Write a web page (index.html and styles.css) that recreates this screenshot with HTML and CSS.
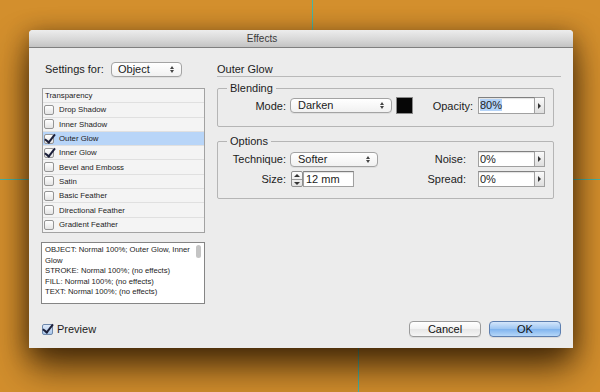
FILE: index.html
```
<!DOCTYPE html>
<html>
<head>
  <meta charset="UTF-8">
  <title>Effects</title>
  <link rel="stylesheet" href="styles.css">
</head>
<body>
  <div class="desk">
    <div class="guide guide-h"></div>
    <div class="guide guide-top"></div>
    <div class="guide guide-bottom"></div>

    <div class="dialog">
      <div class="titlebar">Effects</div>
      <div class="dialog-body">
        <div class="columns">
          <div class="col-left">
            <div class="settings-for">
              <span class="sf-label">Settings for:</span>
              <div class="select select-object">Object<span class="updown"></span></div>
            </div>

            <ul class="effect-list">
              <li class="head">Transparency</li>
              <li><span class="cb"></span>Drop Shadow</li>
              <li><span class="cb"></span>Inner Shadow</li>
              <li class="selected"><span class="cb checked"></span>Outer Glow</li>
              <li><span class="cb checked"></span>Inner Glow</li>
              <li><span class="cb"></span>Bevel and Emboss</li>
              <li><span class="cb"></span>Satin</li>
              <li><span class="cb"></span>Basic Feather</li>
              <li><span class="cb"></span>Directional Feather</li>
              <li><span class="cb"></span>Gradient Feather</li>
            </ul>

            <div class="summary">
              <p>OBJECT: Normal 100%; Outer Glow, Inner Glow</p>
              <p>STROKE: Normal 100%; (no effects)</p>
              <p>FILL: Normal 100%; (no effects)</p>
              <p>TEXT: Normal 100%; (no effects)</p>
              <span class="thumb"></span>
            </div>
          </div>

          <div class="col-right">
            <div class="panel-title">Outer Glow</div>

            <div class="group blending">
              <div class="group-title">Blending</div>
              <div class="row">
                <span class="lbl">Mode:</span>
                <div class="select select-mode">Darken<span class="updown"></span></div>
                <span class="swatch"></span>
                <span class="lbl lbl-opacity">Opacity:</span>
                <div class="field"><span class="sel">80%</span></div>
                <span class="arrow-btn"></span>
              </div>
            </div>

            <div class="group options">
              <div class="group-title">Options</div>
              <div class="row">
                <span class="lbl">Technique:</span>
                <div class="select select-tech">Softer<span class="updown"></span></div>
                <span class="lbl lbl-noise">Noise:</span>
                <div class="field">0%</div>
                <span class="arrow-btn"></span>
              </div>
              <div class="row row-size">
                <span class="lbl">Size:</span>
                <span class="spinner"><i class="up"></i><i class="down"></i></span>
                <div class="field field-size">12 mm</div>
                <span class="lbl lbl-spread">Spread:</span>
                <div class="field">0%</div>
                <span class="arrow-btn"></span>
              </div>
            </div>
          </div>
        </div>

        <div class="footer">
          <div class="preview"><span class="cb checked blue"></span>Preview</div>
          <div class="buttons">
            <button class="btn">Cancel</button>
            <button class="btn btn-ok">OK</button>
          </div>
        </div>
      </div>
    </div>
  </div>
</body>
</html>
```
FILE: styles.css
```
body {
  margin: 0;
  width: 600px;
  height: 392px;
  overflow: hidden;
  background-color: #d38f2d;
  font-family: "Liberation Sans", Arial, sans-serif;
  font-size: 11px;
  color: #1c1c1c;
}
.desk {
  position: relative;
  width: 600px;
  height: 392px;
  padding-top: 30px;
  box-sizing: border-box;
}
.guide {
  position: absolute;
  background-color: #45b5a6;
}
.guide-h {
  left: 0;
  right: 0;
  top: 179px;
  height: 1px;
}
.guide-top {
  left: 312px;
  top: 0;
  width: 1px;
  height: 40px;
}
.guide-bottom {
  left: 358px;
  top: 340px;
  width: 1px;
  height: 52px;
}
.dialog {
  position: relative;
  margin-left: 29px;
  width: 544px;
  height: 318px;
  background-color: #ececec;
  border-radius: 4px 4px 0 0;
  box-shadow: 0 20px 36px rgba(35, 18, 0, 0.72), 0 4px 22px rgba(35, 18, 0, 0.45);
  display: flex;
  flex-direction: column;
}
.titlebar {
  height: 17px;
  line-height: 17px;
  border-bottom: 1px solid #7f7f7f;
  border-radius: 4px 4px 0 0;
  background: linear-gradient(#ededed, #d6d6d6 60%, #c3c3c3);
  text-align: center;
  padding-right: 78px;
  font-size: 10px;
  color: #3a3a3a;
}
.dialog-body {
  padding: 14px 12px 0 12px;
}
.columns {
  display: flex;
}
.col-left {
  width: 164px;
}
.col-right {
  flex: 1;
  margin-left: 12px;
}
.settings-for {
  display: flex;
  align-items: center;
  height: 14px;
  padding-left: 4px;
}
.sf-label {
  width: 66px;
}
.select {
  position: relative;
  box-sizing: border-box;
  height: 15px;
  line-height: 13px;
  padding-left: 7px;
  border: 1px solid #a3a3a3;
  border-radius: 4px;
  background: linear-gradient(#ffffff, #f1f1f1);
  box-shadow: 0 1px 0 rgba(0, 0, 0, 0.06);
}
.updown {
  position: absolute;
  right: 6px;
  top: 3px;
  width: 5px;
  height: 7px;
}
.updown:before, .updown:after {
  content: "";
  position: absolute;
  left: 0;
  border-left: 2.5px solid transparent;
  border-right: 2.5px solid transparent;
}
.updown:before {
  top: 0;
  border-bottom: 3px solid #444;
}
.updown:after {
  bottom: 0;
  border-top: 3px solid #444;
}
.select-object {
  width: 71px;
  padding-left: 6px;
}
.effect-list {
  list-style: none;
  margin: 12px 0 0 1px;
  padding: 0;
  width: 163px;
  height: 145px;
  box-sizing: border-box;
  border: 1px solid #a2a2a2;
  background-color: #f4f4f4;
  font-size: 7.8px;
}
.effect-list li {
  box-sizing: border-box;
  height: 14.3px;
  display: flex;
  align-items: center;
  padding-left: 1px;
  border-bottom: 1px solid #e0e0e0;
}
.effect-list li:last-child {
  border-bottom: none;
}
.effect-list li.head {
  padding-left: 2px;
}
.effect-list li.selected {
  background-color: #b8d5f8;
}
.cb {
  position: relative;
  flex: none;
  box-sizing: border-box;
  width: 10px;
  height: 10px;
  margin-right: 5px;
  border: 1px solid #959595;
  border-radius: 2px;
  background: linear-gradient(#ffffff, #e4e4e4);
}
.cb.checked:after {
  content: "";
  position: absolute;
  left: 2px;
  top: -3px;
  width: 4px;
  height: 9px;
  border-right: 2px solid #1b1f3a;
  border-bottom: 2px solid #1b1f3a;
  transform: rotate(38deg);
}
.summary {
  position: relative;
  margin: 9px 0 0 0;
  width: 164px;
  height: 62px;
  box-sizing: border-box;
  border: 1px solid #858585;
  background-color: #ffffff;
  padding: 2px 10px 0 3px;
  font-size: 7.7px;
  line-height: 10.5px;
}
.summary p {
  margin: 0;
}
.thumb {
  position: absolute;
  right: 3px;
  top: 2px;
  width: 5px;
  height: 13px;
  border-radius: 3px;
  background-color: #c4c4c4;
}
.panel-title {
  height: 14px;
  line-height: 14px;
  border-bottom: 1px solid #b9b9b9;
}
.group {
  margin: 11px 7px 0 0;
  border: 1px solid #b5b5b5;
  border-radius: 2px;
  padding-bottom: 12px;
}
.group.options {
  margin-top: 14px;
  padding-bottom: 11px;
}
.group-title {
  display: table;
  margin: -8px 0 0 9px;
  padding: 0 3px;
  line-height: 14px;
  background-color: #ececec;
}
.row {
  display: flex;
  align-items: center;
  height: 17px;
  margin-top: 2px;
}
.options .row {
  height: 16px;
  margin-top: 3px;
}
.options .row-size {
  margin-top: 4px;
}
.lbl {
  width: 68px;
  text-align: right;
  margin-right: 4px;
}
.select-mode {
  width: 102px;
  margin-right: 4px;
}
.select-tech {
  width: 88px;
}
.swatch {
  box-sizing: border-box;
  width: 17px;
  height: 17px;
  border: 1px solid #8a8a8a;
  background-color: #060606;
}
.lbl-opacity {
  width: 60px;
  margin-right: 5px;
}
.lbl-noise {
  width: 88px;
  margin-right: 12px;
}
.lbl-spread {
  width: 112px;
  margin-right: 12px;
}
.field {
  box-sizing: border-box;
  width: 57px;
  height: 100%;
  padding-left: 1px;
  line-height: 14px;
  border: 1px solid #a0a0a0;
  border-top-color: #808080;
  background-color: #ffffff;
  box-shadow: inset 0 1px 1px rgba(0, 0, 0, 0.12);
}
.field .sel {
  background-color: #b4d3f8;
}
.field-size {
  width: 51px;
  padding-left: 2px;
}
.arrow-btn {
  position: relative;
  box-sizing: border-box;
  width: 10px;
  height: 100%;
  border: 1px solid #a0a0a0;
  border-left: none;
  background: linear-gradient(#fafafa, #dedede);
}
.arrow-btn:after {
  content: "";
  position: absolute;
  left: 3px;
  top: 50%;
  margin-top: -3px;
  border-top: 3px solid transparent;
  border-bottom: 3px solid transparent;
  border-left: 3px solid #333;
}
.spinner {
  box-sizing: border-box;
  width: 12px;
  height: 16px;
  margin-left: 1px;
  border: 1px solid #8e8e8e;
  border-radius: 2px;
  display: flex;
  flex-direction: column;
  background: linear-gradient(#fdfdfd, #e2e2e2);
}
.spinner i {
  position: relative;
  flex: 1;
}
.spinner i.up {
  border-bottom: 1px solid #9a9a9a;
}
.spinner i:after {
  content: "";
  position: absolute;
  left: 2px;
  top: 2px;
  border-left: 3px solid transparent;
  border-right: 3px solid transparent;
}
.spinner i.up:after {
  border-bottom: 3px solid #333;
}
.spinner i.down:after {
  border-top: 3px solid #333;
}
.footer {
  display: flex;
  align-items: center;
  justify-content: space-between;
  height: 16px;
  margin-top: 17px;
}
.preview {
  display: flex;
  align-items: center;
}
.cb.blue {
  width: 11px;
  height: 11px;
  margin-left: 1px;
  margin-right: 4px;
  border-color: #6e88ab;
  background: linear-gradient(#dfeafa, #a9c6ea);
}
.buttons {
  display: flex;
  gap: 8px;
}
.btn {
  box-sizing: border-box;
  width: 72px;
  height: 16px;
  padding: 0;
  font-family: inherit;
  font-size: 11px;
  line-height: 14px;
  color: #111;
  border: 1px solid #9b9b9b;
  border-radius: 4px;
  background: linear-gradient(#ffffff, #f3f3f3 50%, #e6e6e6 51%, #f6f6f6);
  box-shadow: 0 1px 0 rgba(0, 0, 0, 0.08);
}
.btn-ok {
  border-color: #5d7fb0;
  background: linear-gradient(#d4e6fb, #9cc5f2 50%, #7fb3ee 51%, #b6d7f8);
}
```
